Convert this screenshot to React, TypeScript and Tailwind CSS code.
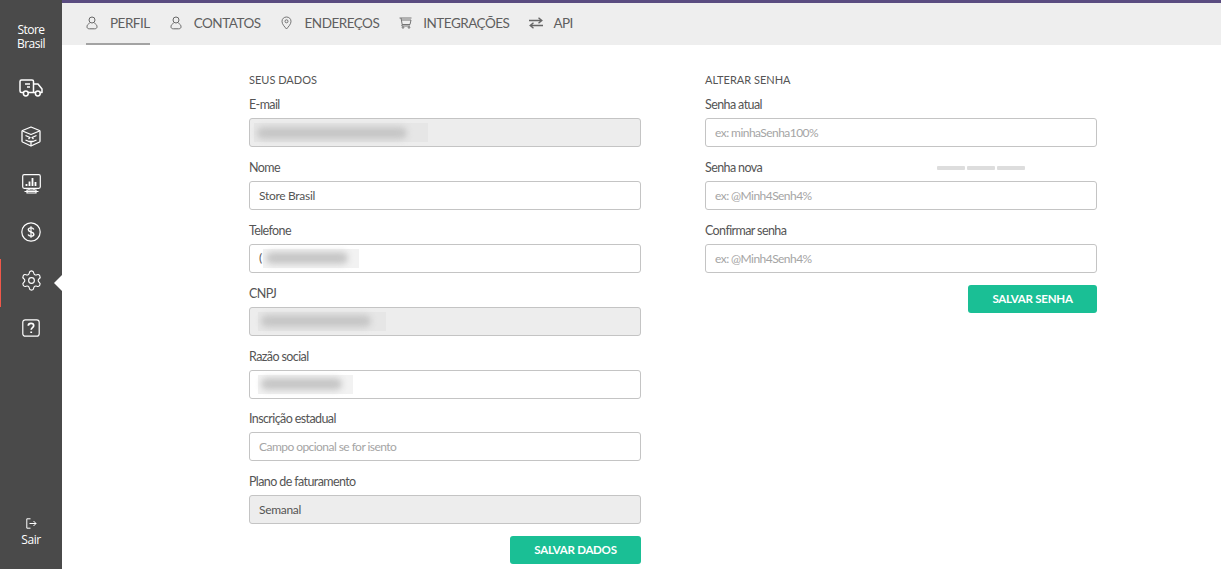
import { Settings } from "lucide-react";
import type { ReactNode } from "react";

function UserIcon() {
  return (
    <svg width="12" height="14" viewBox="0 0 12 14" fill="none" stroke="currentColor" strokeWidth="1">
      <circle cx="6" cy="4" r="3" />
      <path d="M3.6 7.2C2 8 1 9.2 1 10.8 1 12.2 2 12.8 3.4 12.8h5.2c1.4 0 2.4-.6 2.4-2 0-1.600-1-2.800-2.600-3.600" />
    </svg>
  );
}

function PinIcon() {
  return (
    <svg width="11" height="14" viewBox="0 0 11 14" fill="none" stroke="currentColor" strokeWidth="0.9">
      <path d="M5.500 13C3.500 10.500 1 8.300 1 5.300 1 2.800 3 1 5.500 1S10 2.800 10 5.300C10 8.300 7.500 10.500 5.500 13Z" />
      <circle cx="5.500" cy="5.300" r="1.500" />
    </svg>
  );
}

function CartIcon() {
  return (
    <svg width="13" height="12" viewBox="0 0 13 12" fill="none" stroke="currentColor" strokeWidth="0.9">
      <path d="M0.500 1H12.500M2 1L3.200 7.500H11L12 3H2.500M3.200 7.500L2.800 9H11" />
      <circle cx="4" cy="10.500" r="0.800" />
      <circle cx="10" cy="10.500" r="0.800" />
    </svg>
  );
}

function SwapIcon() {
  return (
    <svg width="14" height="12" viewBox="0 0 14 12" fill="none" stroke="currentColor" strokeWidth="1.400">
      <path d="M0 3.500H12.500M9.500 0.800L12.800 3.500L9.500 6.200" />
      <path d="M14 8.500H1.500M4.500 5.800L1.200 8.500L4.500 11.200" />
    </svg>
  );
}

function TruckIcon() {
  return (
    <svg width="24" height="18" viewBox="0 0 24 18" fill="none" stroke="currentColor" strokeWidth="1.500" strokeLinejoin="round">
      <path d="M4.500 13.500H2.500C1.500 13.500 1 13 1 12V2.500C1 1.500 1.500 1 2.500 1H13C14 1 14.500 1.500 14.500 2.500V13.500H9" />
      <path d="M14.500 5H19L23 10V13.500H21M16.500 13.500H14.500" />
      <circle cx="6.800" cy="14.500" r="2.400" />
      <circle cx="18.800" cy="14.500" r="2.400" />
      <path d="M6 5H11M8 8H11" />
    </svg>
  );
}

function BoxIcon() {
  return (
    <svg width="20" height="21" viewBox="0 0 20 21" fill="none" stroke="currentColor" strokeWidth="1.300" strokeLinejoin="round">
      <path d="M10 1L18.500 4.500C19 4.700 19 5 19 5.500V15C19 15.500 19 15.700 18.500 16L10 20L1.500 16C1 15.700 1 15.500 1 15V5.500C1 5 1 4.700 1.500 4.500Z" />
      <path d="M1.500 5L10 8.500L18.500 5" />
      <path d="M4.500 9.500L9 11.500L7.500 13M15.500 9.500L11 11.500L12.500 13M4.500 14L8 15.500H12L15.500 14M10 15.500V20" />
    </svg>
  );
}

function ChartIcon() {
  return (
    <svg width="19" height="20" viewBox="0 0 19 20" fill="none" stroke="currentColor" strokeWidth="1.200">
      <rect x="0.700" y="0.700" width="17.600" height="13.600" rx="1.500" />
      <path d="M5 16H14V19H5Z" />
      <path d="M7 14.500V16M12 14.500V16M2.500 17.500H16.500" />
      <path d="M4.500 12V10M7.500 12V7.500M10.500 12V4M13.500 12V8" strokeWidth="1.800" />
    </svg>
  );
}

function DollarIcon() {
  return (
    <svg width="20" height="20" viewBox="0 0 20 20" fill="none" stroke="currentColor" strokeWidth="1.200">
      <circle cx="10" cy="10" r="9.200" />
      <path d="M12.800 7.400C12.400 6.400 11.300 5.900 10 5.900 8.500 5.900 7.300 6.500 7.300 7.800 7.300 10.500 12.900 9.500 12.900 12.200 12.900 13.500 11.600 14.100 10 14.100 8.600 14.100 7.500 13.600 7.100 12.600" strokeWidth="1.400" />
      <path d="M10 4.300V15.700" strokeWidth="1.200" />
    </svg>
  );
}

function HelpIcon() {
  return (
    <svg width="18" height="18" viewBox="0 0 18 18" fill="none" stroke="currentColor" strokeWidth="1.200">
      <rect x="0.800" y="0.800" width="16.400" height="16.400" rx="2.500" />
      <path d="M6.300 6.800C6.300 5.200 7.500 4.400 9 4.400S11.700 5.300 11.700 6.700C11.700 8.500 9.200 8.800 9.200 10.800" strokeWidth="1.700" />
      <path d="M9.200 12.500V14" strokeWidth="1.800" />
    </svg>
  );
}

function ExitIcon() {
  return (
    <svg width="11" height="11" viewBox="0 0 11 11" fill="none" stroke="currentColor" strokeWidth="1">
      <path d="M4.500 0.800H0.800V10.200H4.500" />
      <path d="M3.500 5.500H10M7.500 3L10 5.500L7.500 8" />
    </svg>
  );
}

function NavItem({ children, active }: { children: ReactNode; active?: boolean }) {
  return (
    <div
      className={
        active
          ? "relative flex h-[48px] items-center justify-center border-l border-[#f0584a] pb-[6px] text-white"
          : "flex h-[48px] items-center justify-center pb-[6px] text-white"
      }
    >
      {children}
      {active && (
        <span className="absolute right-0 top-[16px] h-0 w-0 border-y-[8px] border-r-[8px] border-y-transparent border-r-white" />
      )}
    </div>
  );
}

function Tab({ icon, label, active }: { icon: ReactNode; label: string; active?: boolean }) {
  return (
    <div
      className={
        active
          ? "flex h-[42px] items-center border-b-2 border-[#a3a3a3]"
          : "flex h-[42px] items-center border-b-2 border-transparent"
      }
    >
      <span className="flex w-[24px] items-center text-[#666]">{icon}</span>
      <span className="text-[13.500px] uppercase tracking-[-0.5px] text-[#5f5f5f]">{label}</span>
    </div>
  );
}

function Field({ label, children, extra }: { label: string; children: ReactNode; extra?: ReactNode }) {
  return (
    <div className="mb-[10.830px]">
      <div className="mb-[5px] flex h-[18px] items-center pt-[2px] text-[12.500px] leading-[16px] tracking-[-0.6px] text-[#555]">
        <span className="w-[232px]">{label}</span>
        {extra}
      </div>
      {children}
    </div>
  );
}

function TextBox({ value, placeholder, disabled }: { value?: string; placeholder?: string; disabled?: boolean }) {
  return (
    <input
      readOnly
      value={value ?? ""}
      placeholder={placeholder}
      className={
        disabled
          ? "block h-[29px] w-full rounded-[3px] border border-[#c4c4c4] bg-[#ededed] px-[9px] text-[12px] tracking-[-0.3px] text-[#555] outline-none"
          : "block h-[29px] w-full rounded-[3px] border border-[#c4c4c4] bg-white px-[9px] text-[12px] tracking-[-0.3px] text-[#555] outline-none placeholder:tracking-[-0.55px] placeholder:text-[#a5a5a5]"
      }
    />
  );
}

// censored values in the picture, a smudge instead of text
function Redacted({ width, offset, disabled, prefix }: { width: string; offset: string; disabled?: boolean; prefix?: string }) {
  return (
    <div
      className={
        disabled
          ? "flex h-[29px] w-full items-center overflow-hidden rounded-[3px] border border-[#c4c4c4] bg-[#ededed]"
          : "flex h-[29px] w-full items-center overflow-hidden rounded-[3px] border border-[#c4c4c4] bg-white"
      }
    >
      <span className={offset}>{prefix}</span>
      <div
        className={
          disabled
            ? `${width} flex h-[19px] items-center bg-[#e6e6e6] pl-[3px]`
            : `${width} flex h-[19px] items-center bg-[#f2f2f2] pl-[3px]`
        }
      >
        <div className="h-[12px] w-[88%] rounded-full bg-[#c6c6c6] blur-[3px]" />
      </div>
    </div>
  );
}

function SaveButton({ label, width }: { label: string; width: string }) {
  return (
    <div className="flex justify-end pt-[1px]">
      <button className={`${width} h-[28px] rounded-[3px] bg-[#1abf95] pb-[1px] text-[11.500px] font-bold tracking-[-0.25px] text-white`}>
        {label}
      </button>
    </div>
  );
}

export default function App() {
  return (
    <div className="flex h-screen overflow-hidden bg-white font-['Lato',sans-serif]">
      <aside className="flex w-[62px] shrink-0 flex-col bg-[#4a4a4a]">
        <div className="flex h-[67px] justify-center pt-[23px] font-['Open_Sans',sans-serif] text-[12px] leading-[14px] tracking-[-0.5px] text-white">
          <span className="w-[32px] text-center">Store Brasil</span>
        </div>
        <NavItem><TruckIcon /></NavItem>
        <NavItem><BoxIcon /></NavItem>
        <NavItem><ChartIcon /></NavItem>
        <NavItem><DollarIcon /></NavItem>
        <NavItem active><Settings size={23} strokeWidth={1.200} /></NavItem>
        <NavItem><HelpIcon /></NavItem>
        <div className="mt-auto flex flex-col items-center pb-[21px] font-['Open_Sans',sans-serif] text-[12px] leading-[16px] tracking-[-0.4px] text-white">
          <ExitIcon />
          <span className="mt-[3px]">Sair</span>
        </div>
      </aside>

      <div className="min-w-0 flex-1">
        <header className="flex h-[45px] gap-[20px] border-t-[3px] border-[#5a4c80] bg-[#eeeeee] pl-[24px]">
          <Tab active icon={<UserIcon />} label="Perfil" />
          <Tab icon={<UserIcon />} label="Contatos" />
          <Tab icon={<PinIcon />} label="Endereços" />
          <Tab icon={<CartIcon />} label="Integrações" />
          <Tab icon={<SwapIcon />} label="API" />
        </header>

        <main className="flex gap-[64px] pl-[187px] pt-[27.300px]">
          <section className="w-[392px]">
            <h2 className="mb-[7px] h-[16px] text-[11px] uppercase leading-[16px] text-[#555]">Seus dados</h2>
            <Field label="E-mail"><Redacted disabled offset="w-[4px]" width="w-[174px]" /></Field>
            <Field label="Nome"><TextBox value="Store Brasil" /></Field>
            <Field label="Telefone"><Redacted offset="w-[13px] pl-[9px] text-[12px] text-[#555]" prefix="(" width="w-[96px]" /></Field>
            <Field label="CNPJ"><Redacted disabled offset="w-[8px]" width="w-[128px]" /></Field>
            <Field label="Razão social"><Redacted offset="w-[8px]" width="w-[95px]" /></Field>
            <Field label="Inscrição estadual"><TextBox placeholder="Campo opcional se for isento" /></Field>
            <Field label="Plano de faturamento"><TextBox disabled value="Semanal" /></Field>
            <SaveButton label="SALVAR DADOS" width="w-[131px]" />
          </section>

          <section className="w-[392px]">
            <h2 className="mb-[7px] h-[16px] text-[11px] uppercase leading-[16px] text-[#555]">Alterar senha</h2>
            <Field label="Senha atual"><TextBox placeholder="ex: minhaSenha100%" /></Field>
            <Field
              label="Senha nova"
              extra={
                <div className="flex gap-[2px]">
                  <span className="h-[4px] w-[28px] rounded-[1px] bg-[#dddddd]" />
                  <span className="h-[4px] w-[28px] rounded-[1px] bg-[#dddddd]" />
                  <span className="h-[4px] w-[28px] rounded-[1px] bg-[#dddddd]" />
                </div>
              }
            >
              <TextBox placeholder="ex: @Minh4Senh4%" />
            </Field>
            <Field label="Confirmar senha"><TextBox placeholder="ex: @Minh4Senh4%" /></Field>
            <SaveButton label="SALVAR SENHA" width="w-[129px]" />
          </section>
        </main>
      </div>
    </div>
  );
}
